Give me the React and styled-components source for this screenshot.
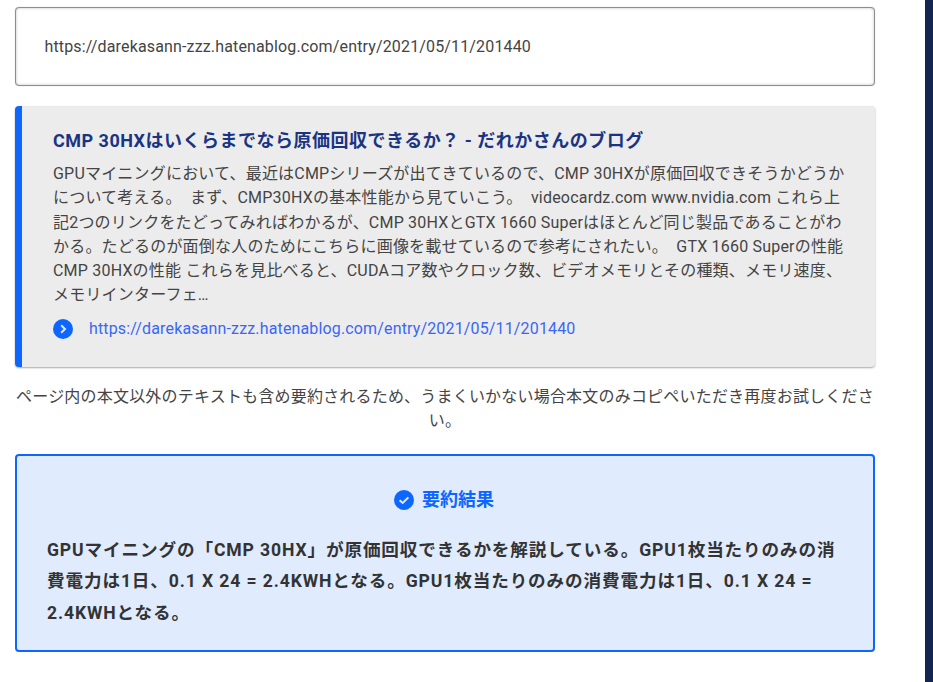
import React from 'react';
import styled, { createGlobalStyle } from 'styled-components';

const GlobalStyle = createGlobalStyle`
  html, body {
    margin: 0;
    padding: 0;
    background: #fff;
  }
  body {
    font-family: Roboto, "Noto Sans CJK JP", sans-serif;
    color: #333;
    letter-spacing: 0.15px;
    overflow: hidden;
  }
`;

const Page = styled.div`
  display: flex;
  justify-content: space-between;
  height: 682px;
  width: 933px;
`;

const Main = styled.main`
  width: 860px;
  margin-left: 15px;
  padding-top: 7px;
`;

const Sidebar = styled.div`
  width: 8px;
  height: 100%;
  background: #14254f;
`;

const UrlField = styled.div`
  box-sizing: border-box;
  height: 79px;
  display: flex;
  align-items: center;
  padding: 0 28.5px;
  background: #fff;
  border: 1px solid #8e8e8e;
  border-radius: 4px;
  box-shadow: inset 0 0 3px rgba(0, 0, 0, 0.25), 0 0 1px rgba(0, 0, 0, 0.3);
  font-size: 16px;
  color: #444;
`;

const Card = styled.article`
  box-sizing: border-box;
  height: 261px;
  margin-top: 20px;
  padding: 21px 28px 0 31px;
  background: #ececec;
  border-left: 7px solid #0d66ff;
  border-radius: 4px;
  box-shadow: 0 1px 2px rgba(0, 0, 0, 0.35);
`;

const CardTitle = styled.h2`
  margin: 0;
  font-size: 18px;
  line-height: 27px;
  font-weight: 700;
  letter-spacing: 0.5px;
  color: #1a3484;
`;

const CardBody = styled.p`
  margin: 8px 0 0;
  font-size: 16px;
  line-height: 24.3px;
  letter-spacing: 0.2px;
  color: #444;
`;

const CardLink = styled.a`
  display: flex;
  align-items: center;
  gap: 16px;
  margin-top: 9px;
  font-size: 16px;
  line-height: 24px;
  color: #3b66f5;
  text-decoration: none;
`;

const Note = styled.p`
  margin: 18px 0 0;
  font-size: 16px;
  line-height: 24px;
  text-align: center;
  letter-spacing: 0.2px;
  color: #444;
`;

const Result = styled.section`
  box-sizing: border-box;
  height: 198px;
  margin-top: 21px;
  padding: 30px 30px 0;
  background: #e0ebfd;
  border: 2px solid #0d66ff;
  border-radius: 4px;
`;

const ResultHead = styled.h3`
  display: flex;
  align-items: center;
  justify-content: center;
  gap: 8px;
  margin: 0;
  padding-right: 2px;
  font-size: 18px;
  line-height: 27px;
  font-weight: 700;
  letter-spacing: 0;
  color: #0d66ff;
`;

const ResultText = styled.p`
  margin: 21.5px 0 0;
  font-size: 17.6px;
  line-height: 31.5px;
  font-weight: 700;
  letter-spacing: 0.05em;
  color: #333;
`;

const CircleIcon = ({ size, children }) => (
  <svg width={size} height={size} viewBox="0 0 20 20" aria-hidden="true">
    <circle cx="10" cy="10" r="10" fill="#0d66ff" />
    {children}
  </svg>
);

const url = 'https://darekasann-zzz.hatenablog.com/entry/2021/05/11/201440';

const description =
  'GPUマイニングにおいて、最近はCMPシリーズが出てきているので、CMP 30HXが原価回収できそうかどうかについて考える。\u2002まず、CMP30HXの基本性能から見ていこう。\u2002videocardz.com www.nvidia.com これら上記2つのリンクをたどってみればわかるが、CMP 30HXとGTX 1660 Superはほとんど同じ製品であることがわかる。たどるのが面倒な人のためにこちらに画像を載せているので参考にされたい。\u2002GTX 1660 Superの性能 CMP 30HXの性能 これらを見比べると、CUDAコア数やクロック数、ビデオメモリとその種類、メモリ速度、メモリインターフェ…';

export default function App() {
  return (
    <Page>
      <GlobalStyle />
      <Main>
        <UrlField>{url}</UrlField>

        <Card>
          <CardTitle>CMP 30HXはいくらまでなら原価回収できるか？ - だれかさんのブログ</CardTitle>
          <CardBody>{description}</CardBody>
          <CardLink href="#">
            <CircleIcon size={20}>
              <path d="M8.2 6.2 12 10l-3.8 3.8" fill="none" stroke="#dfe9fb" strokeWidth="2" />
            </CircleIcon>
            {url}
          </CardLink>
        </Card>

        <Note>ページ内の本文以外のテキストも含め要約されるため、うまくいかない場合本文のみコピペいただき再度お試しください。</Note>

        <Result>
          <ResultHead>
            <CircleIcon size={20}>
              <path d="M5.6 10.3 8.7 13l5.7-5.6" fill="none" stroke="#dfe9fb" strokeWidth="2" />
            </CircleIcon>
            要約結果
          </ResultHead>
          <ResultText>
            GPUマイニングの「CMP 30HX」が原価回収できるかを解説している。GPU1枚当たりのみの消費電力は1日、0.1 X 24 = 2.4KWHとなる。GPU1枚当たりのみの消費電力は1日、0.1 X 24 = 2.4KWHとなる。
          </ResultText>
        </Result>
      </Main>
      <Sidebar />
    </Page>
  );
}
